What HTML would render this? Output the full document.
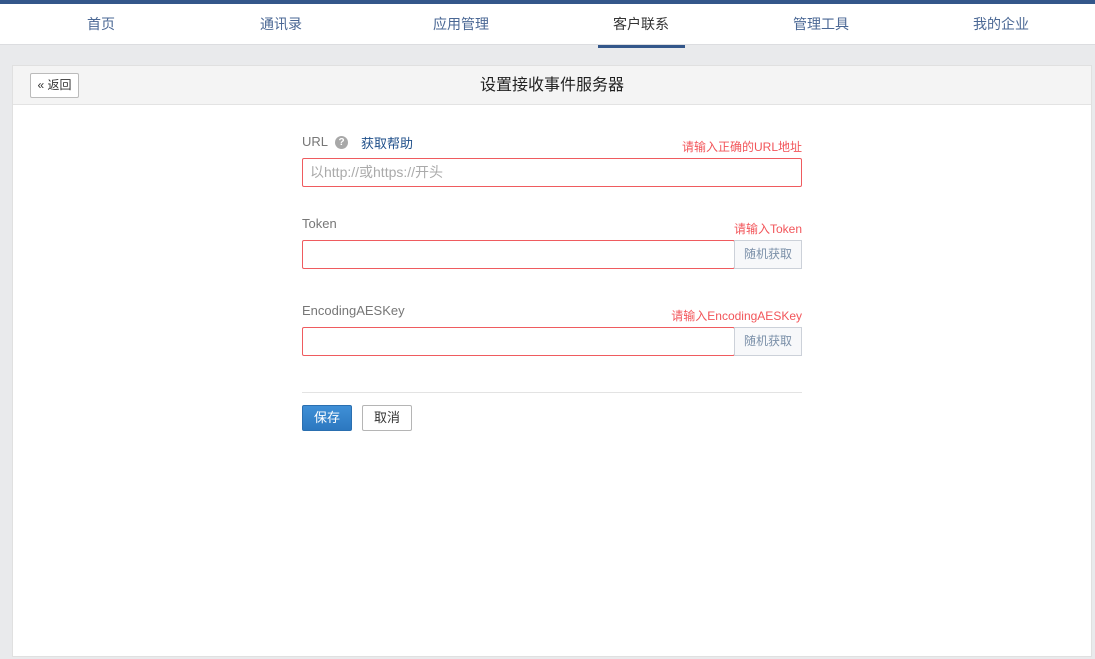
<!DOCTYPE html>
<html><head><meta charset="utf-8"><style>
*{box-sizing:border-box;margin:0;padding:0}
body{width:1095px;height:659px;background:#e9eaec;font-family:"Liberation Sans","Noto Sans CJK SC",sans-serif;font-size:13px;position:relative;overflow:hidden}
.top{position:absolute;left:0;top:0;width:1095px;height:4px;background:#34578a}
.nav{position:absolute;left:0;top:4px;width:1095px;height:41px;background:#fff;border-bottom:1px solid #dcdde0}
.nav a{position:absolute;top:0;width:180px;text-align:center;line-height:40px;font-size:14px;color:#4a6794;text-decoration:none}
.nav a.act{color:#333}
.ul{position:absolute;left:598px;top:41px;width:87px;height:3px;background:#34578a}
.card{position:absolute;left:12px;top:65px;width:1080px;height:592px;background:#fff;border:1px solid #e0e0e0}
.hd{height:39px;background:#f4f4f4;border-bottom:1px solid #e3e3e3;position:relative}
.back{position:absolute;left:17px;top:7px;width:49px;height:25px;border:1px solid #bbb;background:#fff;font-size:12px;line-height:23px;text-align:center;color:#333;border-radius:2px}
.title{text-align:center;line-height:40px;font-size:16px;color:#222}
.abs{position:absolute}
.lbl{color:#777;font-size:13px}
.err{color:#f2555a;font-size:12px;text-align:right;width:500px;left:302px}
.inp{border:1px solid #ef5b5f;height:29px;background:#fff;border-radius:2px}
.rb{border:1px solid #ccd1d9;background:#f7f8fa;color:#7a8fa8;font-size:12px;text-align:center;line-height:27px}
</style></head><body>
<div class="top"></div>
<div class="nav">
<a style="left:11px">首页</a><a style="left:191px">通讯录</a><a style="left:371px">应用管理</a><a class="act" style="left:551px">客户联系</a><a style="left:731px">管理工具</a><a style="left:911px">我的企业</a>
<div class="ul"></div>
</div>
<div class="card"><div class="hd"><div class="back">« 返回</div><div class="title">设置接收事件服务器</div></div></div>
<div class="abs lbl" style="left:302px;top:134px">URL</div>
<div class="abs" style="left:335px;top:136px;width:13px;height:13px;border-radius:50%;background:#a8a8a8;color:#fff;font-size:10px;font-weight:bold;text-align:center;line-height:13px">?</div>
<div class="abs" style="left:361px;top:133px;color:#1f4f8a;font-size:13px">获取帮助</div>
<div class="abs err" style="top:138px">请输入正确的URL地址</div>
<div class="abs inp" style="left:302px;top:158px;width:500px;color:#aaa;font-size:14px;line-height:27px;padding-left:7px">以http://或https://开头</div>
<div class="abs lbl" style="left:302px;top:216px">Token</div>
<div class="abs err" style="top:220px">请输入Token</div>
<div class="abs inp" style="left:302px;top:240px;width:433px"></div>
<div class="abs rb" style="left:734px;top:240px;width:68px;height:29px">随机获取</div>
<div class="abs lbl" style="left:302px;top:303px">EncodingAESKey</div>
<div class="abs err" style="top:307px">请输入EncodingAESKey</div>
<div class="abs inp" style="left:302px;top:327px;width:433px"></div>
<div class="abs rb" style="left:734px;top:327px;width:68px;height:29px">随机获取</div>
<div class="abs" style="left:302px;top:392px;width:500px;height:1px;background:#e3e3e3"></div>
<div class="abs" style="left:302px;top:405px;width:50px;height:26px;background:linear-gradient(#3f8fd6,#2c78c0);border:1px solid #2a6fb0;border-radius:2px;color:#fff;text-align:center;line-height:24px">保存</div>
<div class="abs" style="left:362px;top:405px;width:50px;height:26px;background:#fff;border:1px solid #b5b5b5;border-radius:2px;color:#333;text-align:center;line-height:24px">取消</div>
</body></html>
